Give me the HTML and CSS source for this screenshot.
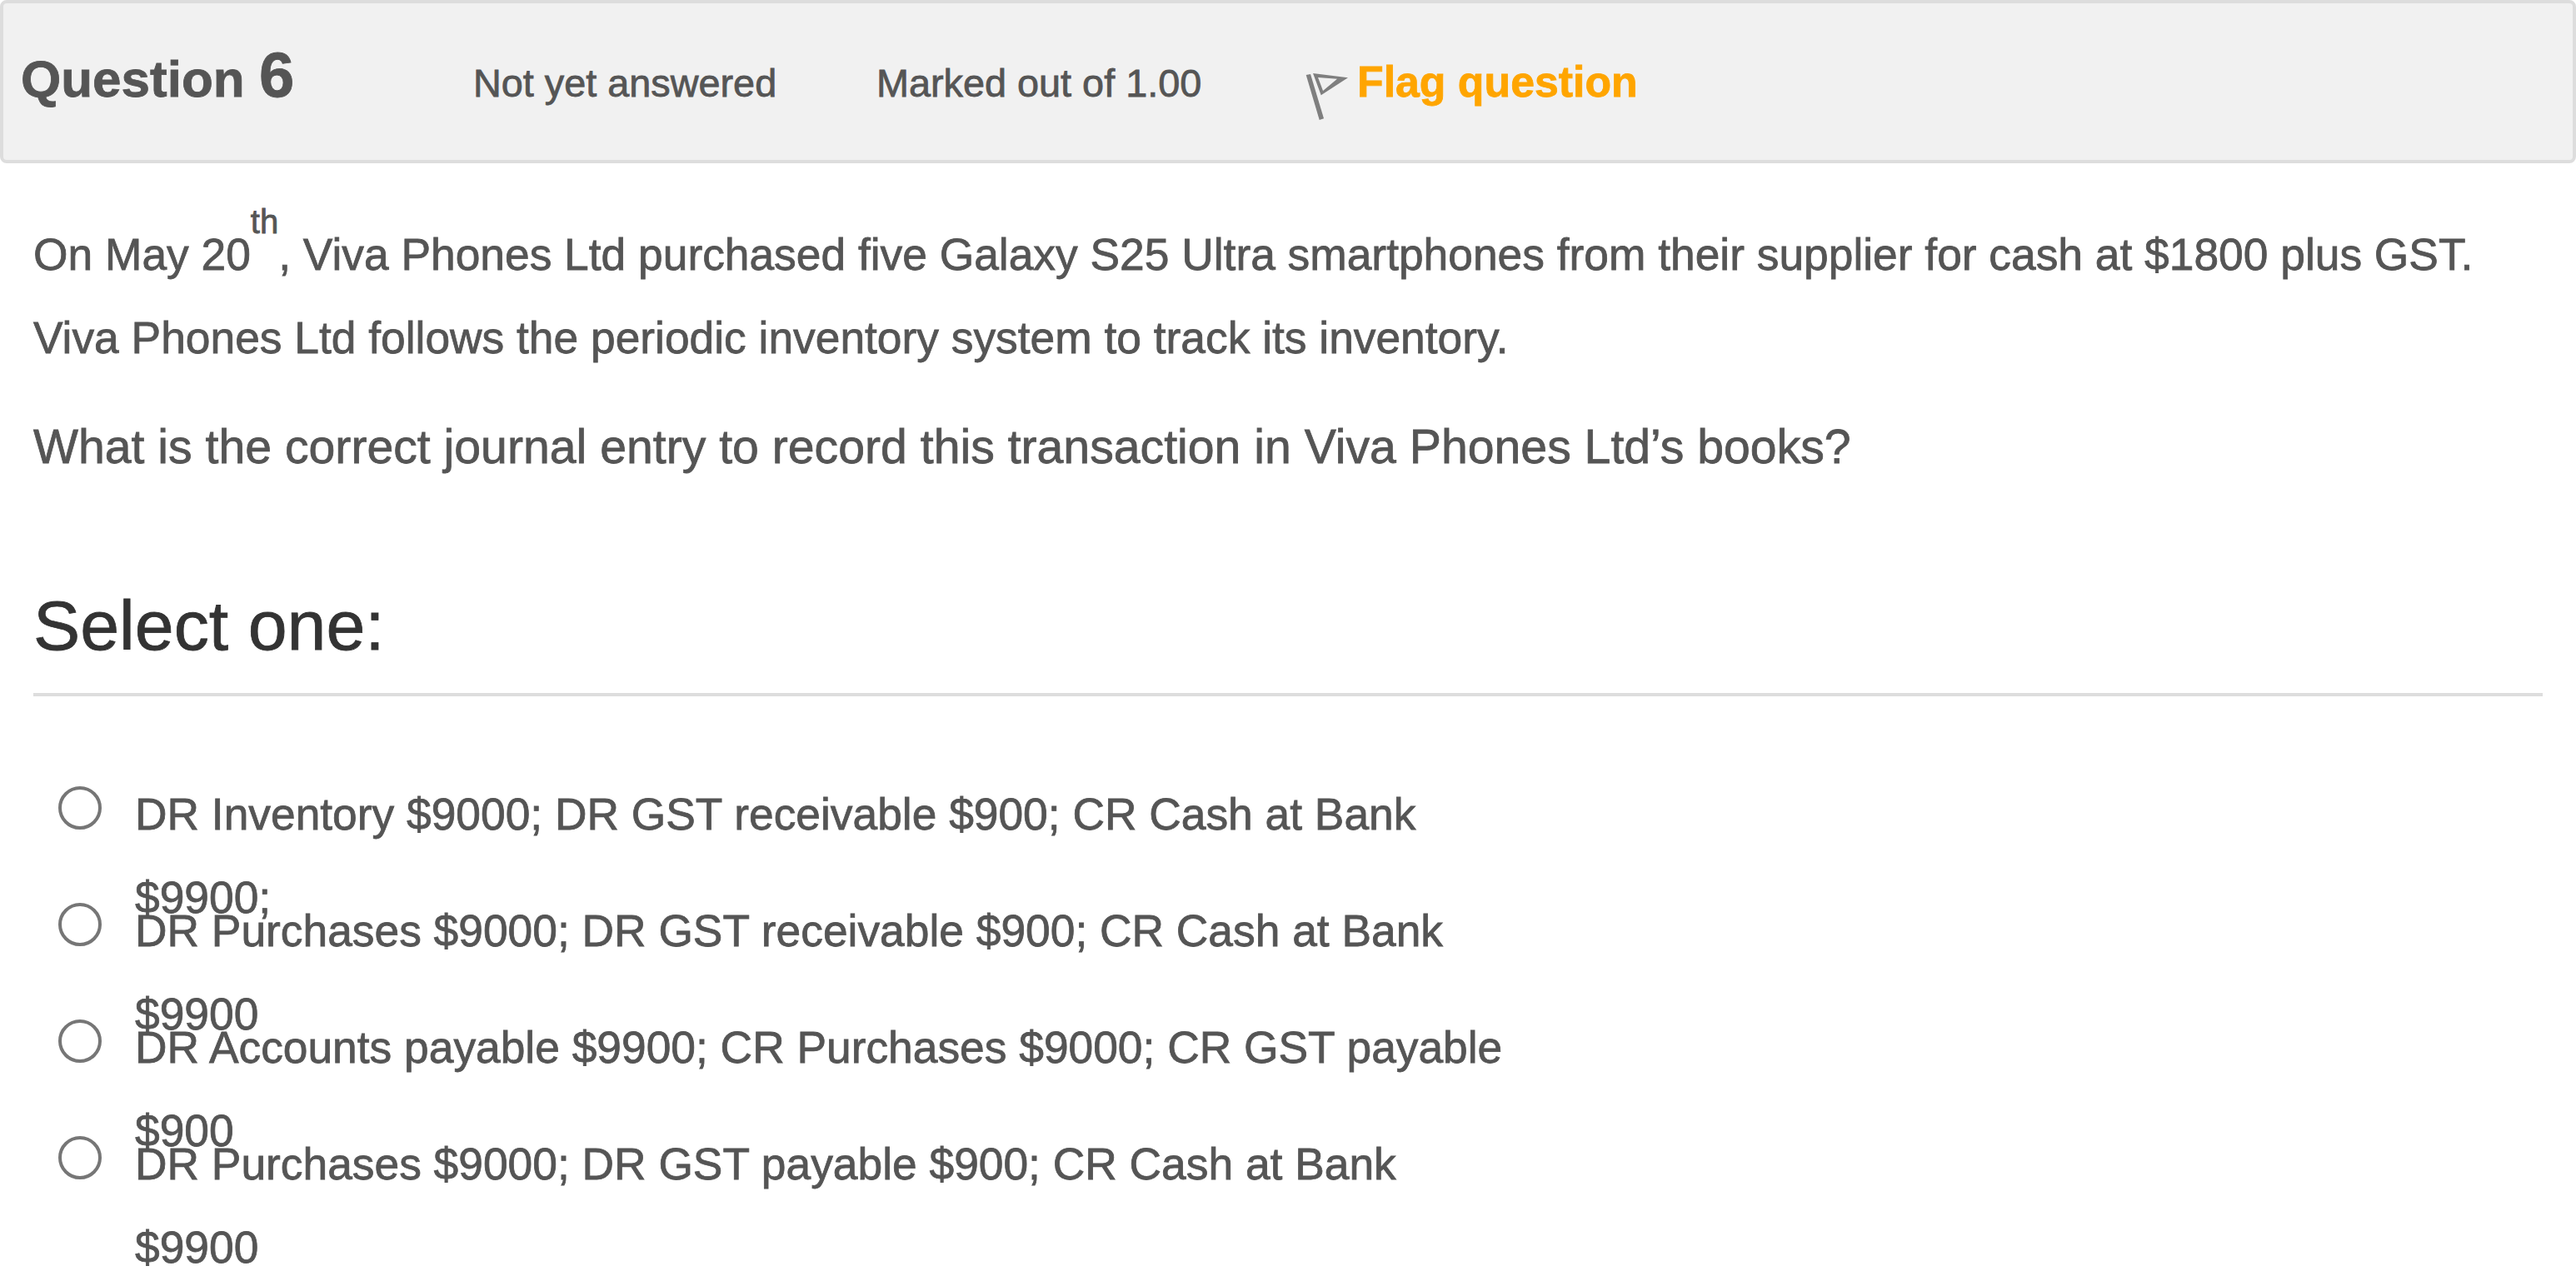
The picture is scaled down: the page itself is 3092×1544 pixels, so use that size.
FILE: index.html
```html
<!DOCTYPE html>
<html lang="en">
<head>
  <meta charset="UTF-8" />
  <meta name="viewport" content="width=device-width, initial-scale=1.0"/>
  <title>Question 6</title>
  <link rel="stylesheet" href="styles.css">
</head>
<body>
  <div class="info">
    <h3 class="no">Question <span class="qno">6</span></h3>
    <div class="state">Not yet answered</div>
    <div class="grade">Marked out of 1.00</div>
    <div class="flag">
      <svg class="flag-icon" viewBox="0 0 52 56" fill="#7f7f7f">
        <path d="M0.7 2 L6 1 L22 54.3 L16.7 56 Z"/>
        <path fill-rule="evenodd" d="M9 0 L51 5.3 L18.7 26.3 Z M15 5 L21 21 L38 6.7 Z"/>
      </svg>
      <a class="flag-text">Flag question</a>
    </div>
  </div>

  <div class="content">
    <div class="qtext">
      <p>On May 20<sup>th</sup>, Viva Phones Ltd purchased five Galaxy S25 Ultra smartphones from their supplier for cash at $1800 plus GST. Viva Phones Ltd follows the periodic inventory system to track its inventory.</p>
      <p class="ask">What is the correct journal entry to record this transaction in Viva Phones Ltd’s books?</p>
    </div>

    <h3 class="prompt">Select one:</h3>

    <div class="answer">
      <div class="option">
        <input type="radio" name="answer" id="answer0">
        <label for="answer0">DR Inventory $9000; DR GST receivable $900; CR Cash at Bank $9900;</label>
      </div>
      <div class="option">
        <input type="radio" name="answer" id="answer1">
        <label for="answer1">DR Purchases $9000; DR GST receivable $900; CR Cash at Bank $9900</label>
      </div>
      <div class="option">
        <input type="radio" name="answer" id="answer2">
        <label for="answer2">DR Accounts payable $9900; CR Purchases $9000; CR GST payable $900</label>
      </div>
      <div class="option">
        <input type="radio" name="answer" id="answer3">
        <label for="answer3">DR Purchases $9000; DR GST payable $900; CR Cash at Bank $9900</label>
      </div>
    </div>
  </div>
</body>
</html>
```

FILE: styles.css
```css
* {
  box-sizing: border-box;
}
body {
  height: 100vh;
  margin: 0;
  font-family: Helvetica, "Liberation Sans", Arial, sans-serif;
  font-size: 53.33px;
  background-color: #fff;
  color: #555;
  -webkit-text-stroke: 0.8px;
  overflow: hidden;
}
h3, p {
  margin: 0;
}

.info {
  display: grid;
  grid-template-columns: 543px 484px 515px auto;
  align-items: baseline;
  height: 196px;
  padding: 44px 21px 0;
  background-color: #f1f1f1;
  border: 4px solid #ddd;
  border-radius: 8px;
  font-size: 46.8px;
  line-height: 84px;
}
.no {
  font-size: 62px;
}
.qno {
  font-size: 76px;
}
.flag {
  display: flex;
  align-items: baseline;
  gap: 10px;
}
.flag-icon {
  align-self: flex-start;
  width: 52px;
  height: 56px;
  margin-top: 32px;
}
.flag-text {
  font-size: 51.8px;
  font-weight: bold;
  color: #ffa500;
}

.content {
  padding: 60px 40px 0;
}
.qtext {
  line-height: 100px;
}
.qtext sup {
  font-size: 40px;
  line-height: 0;
  vertical-align: 44px;
}
.qtext .ask {
  margin-top: 25px;
  font-size: 57.2px;
  line-height: 110px;
}
.prompt {
  height: 135px;
  margin-top: 110px;
  border-bottom: 4px solid #ddd;
  font-size: 84.3px;
  font-weight: normal;
  line-height: 100px;
  color: #333;
}

.answer {
  padding: 91px 0 0 30px;
}
.option {
  display: flex;
  align-items: flex-start;
  gap: 40px;
  height: 140px;
}
.option input {
  appearance: none;
  flex: none;
  width: 52px;
  height: 52px;
  margin: 17px 0 0;
  border: 4px solid #767676;
  border-radius: 50%;
  background-color: #fff;
}
.option label {
  width: 1660px;
  padding-top: 1px;
  line-height: 100px;
}
```
